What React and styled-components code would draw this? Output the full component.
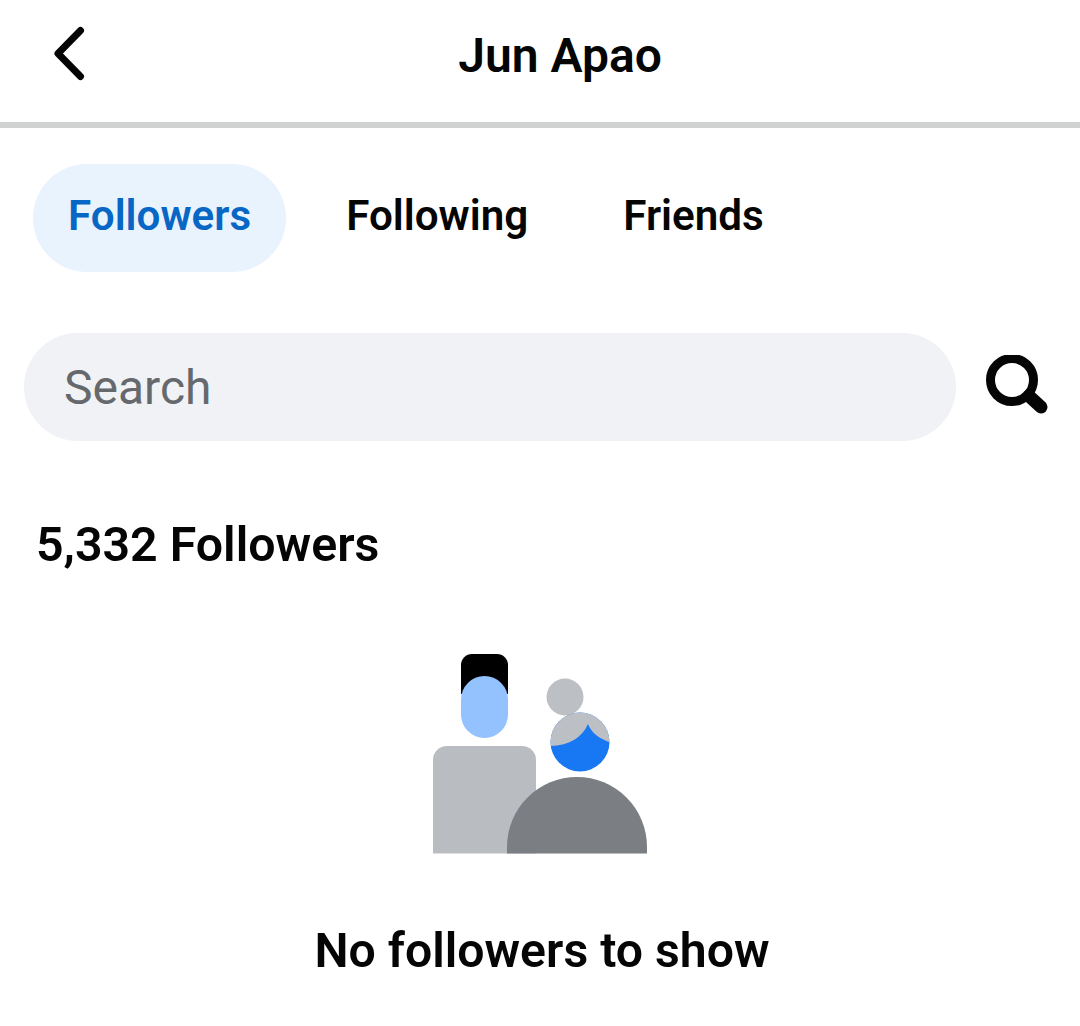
import styled, { createGlobalStyle } from 'styled-components'

const GlobalStyle = createGlobalStyle`
    html, body {
        margin: 0;
        background: #ffffff;
        font-family: Roboto, "Liberation Sans", sans-serif;
        color: #050505;
    }
`

const Page = styled.div`
    width: 1080px;
    height: 1026px;
    overflow: hidden;
    display: flex;
    flex-direction: column;
`

const Header = styled.header`
    height: 122px;
    border-bottom: 6px solid #d0d2d2;
    display: grid;
    grid-template-columns: 120px 1fr 80px;
    align-items: center;
`

const BackButton = styled.button`
    border: none;
    background: none;
    padding: 0 0 12px 50px;
    display: flex;
    svg {
        display: block;
    }
`

const Title = styled.h1`
    margin: 0 0 12px;
    font-size: 48px;
    font-weight: 600;
    text-align: center;
`

const Tabs = styled.nav`
    display: flex;
    gap: 25px;
    padding: 36px 0 0 33px;
`

const Tab = styled.div`
    height: 102px;
    padding: 0 35px 6px;
    border-radius: 54px;
    display: flex;
    align-items: center;
    font-size: 42.2px;
    font-weight: 600;
    background: ${(props) => (props.$active ? '#e9f3fd' : 'transparent')};
    color: ${(props) => (props.$active ? '#0866c4' : '#050505')};
`

const SearchRow = styled.div`
    display: flex;
    align-items: center;
    gap: 28px;
    padding: 61px 0 0 24px;
`

const SearchBox = styled.div`
    width: 932px;
    height: 108px;
    border-radius: 54px;
    background: #f0f2f5;
    box-sizing: border-box;
    padding-left: 40px;
    display: flex;
    align-items: center;
    font-size: 48px;
    color: #65686c;
`

const Count = styled.h2`
    margin: 0;
    padding: 75px 0 0 36px;
    font-size: 48.3px;
    line-height: 58px;
    font-weight: 600;
`

const Empty = styled.section`
    display: flex;
    flex-direction: column;
    align-items: center;
    padding-top: 80px;
`

const Illustration = styled.svg`
    display: block;
`

const EmptyText = styled.p`
    margin: 68px 0 0 4px;
    font-size: 48.2px;
    line-height: 58px;
    font-weight: 600;
`

function EmptyPeople() {
    return (
        <Illustration width="214" height="200" viewBox="0 0 214 200">
            <defs>
                <clipPath id="head">
                    <circle cx="147" cy="88" r="29.5" />
                </clipPath>
            </defs>
            <path d="M28 40V11A11 11 0 0 1 39 0H64A11 11 0 0 1 75 11V40Z" fill="#000" />
            <rect x="28" y="22" width="47" height="62" rx="23.5" fill="#93c2fe" />
            <path d="M0 199.5V106A14 14 0 0 1 14 92H89A14 14 0 0 1 103 106V199.5Z" fill="#b9bdc2" />
            <circle cx="132" cy="43" r="18.5" fill="#bcc0c4" />
            <circle cx="147" cy="88" r="29.5" fill="#1877f2" />
            <path
                d="M112 50H182V90C168 86 159 80 155 70C149 84 135 93 112 92Z"
                fill="#bcc0c4"
                clipPath="url(#head)"
            />
            <path d="M74 199.5V193A70 70 0 0 1 214 193V199.5Z" fill="#7b7e83" />
        </Illustration>
    )
}

export default function App() {
    return (
        <Page>
            <GlobalStyle />
            <Header>
                <BackButton aria-label="Back">
                    <svg width="40" height="60" viewBox="0 0 40 60">
                        <path
                            d="M30.5 5.5L8 28.5L30.5 51.5"
                            fill="none"
                            stroke="#050505"
                            strokeWidth="7"
                            strokeLinecap="round"
                            strokeLinejoin="round"
                        />
                    </svg>
                </BackButton>
                <Title>Jun Apao</Title>
            </Header>
            <Tabs>
                <Tab $active>Followers</Tab>
                <Tab>Following</Tab>
                <Tab>Friends</Tab>
            </Tabs>
            <SearchRow>
                <SearchBox>Search</SearchBox>
                <svg width="66" height="64" viewBox="0 0 66 64">
                    <circle cx="28" cy="25" r="21.5" fill="none" stroke="#050505" strokeWidth="9" />
                    <path d="M45 41L57 52" stroke="#050505" strokeWidth="13" strokeLinecap="round" />
                </svg>
            </SearchRow>
            <Count>5,332 Followers</Count>
            <Empty>
                <EmptyPeople />
                <EmptyText>No followers to show</EmptyText>
            </Empty>
        </Page>
    )
}
